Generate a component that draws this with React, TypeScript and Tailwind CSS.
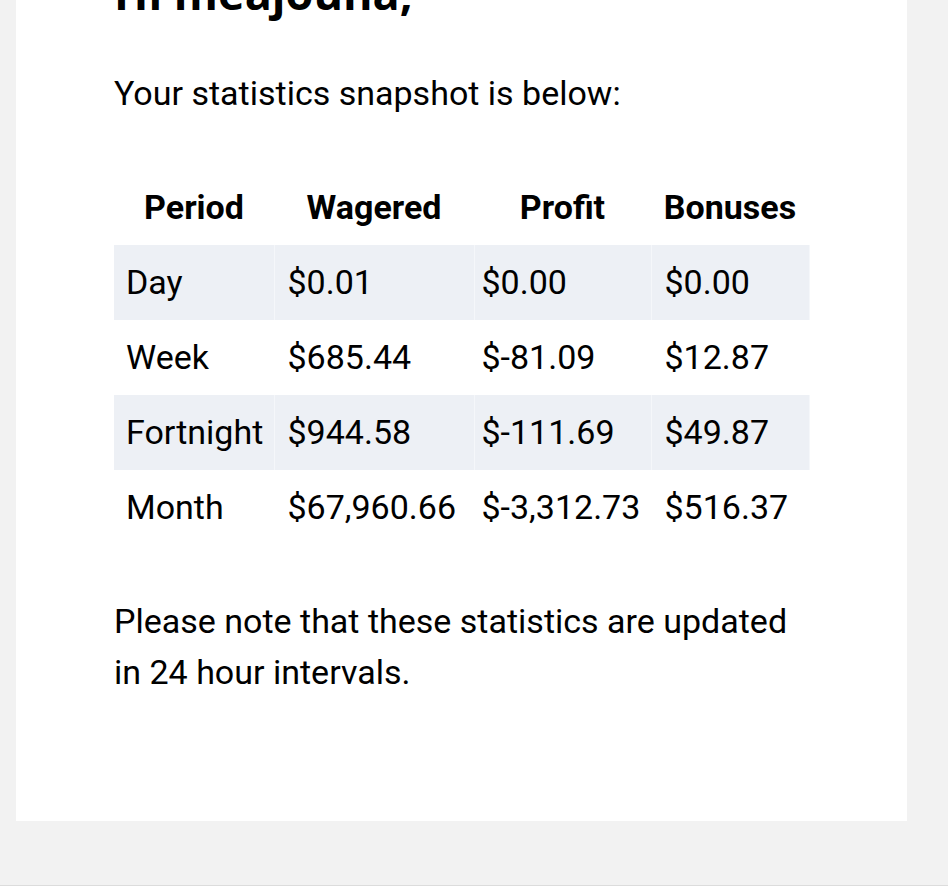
const rows = [
  { period: "Day", wagered: "$0.01", profit: "$0.00", bonuses: "$0.00" },
  { period: "Week", wagered: "$685.44", profit: "$-81.09", bonuses: "$12.87" },
  { period: "Fortnight", wagered: "$944.58", profit: "$-111.69", bonuses: "$49.87" },
  { period: "Month", wagered: "$67,960.66", profit: "$-3,312.73", bonuses: "$516.37" },
];

export default function App() {
  return (
    <div className="overflow-hidden">
      <div className="bg-[#f2f2f2] border-b border-[#dcdcdc] pb-[64px]">
        <div className="ml-[16px] w-[891px] bg-white px-[98px] pb-[123px] text-black font-['Roboto',sans-serif]">
          {/* greeting, scrolled mostly out of view */}
          <h1 className="-mt-[30px] text-[45px] leading-none font-bold font-['Open_Sans',sans-serif]">
            Hi meajouna,
          </h1>

          <p className="mt-[53px] text-[34px] leading-[1.5]">
            Your statistics snapshot is below:
          </p>

          <table className="mt-[51px] w-full table-fixed border-collapse text-[34px] leading-[1.5]">
            <thead>
              <tr>
                <th className="w-[160px] h-[75px] p-0 font-bold text-center">Period</th>
                <th className="w-[200px] h-[75px] p-0 font-bold text-center">Wagered</th>
                <th className="w-[177px] h-[75px] p-0 font-bold text-center">Profit</th>
                <th className="w-[158px] h-[75px] p-0 font-bold text-center">Bonuses</th>
              </tr>
            </thead>
            <tbody>
              {rows.map((r, i) => {
                const cell =
                  i % 2 === 0
                    ? "h-[75px] py-0 whitespace-nowrap border-r border-[#f5f7fa]"
                    : "h-[75px] py-0 whitespace-nowrap border-r border-white";
                return (
                  <tr key={r.period} className={i % 2 === 0 ? "bg-[#edf0f5]" : "bg-white"}>
                    <td className={`${cell} px-[12px]`}>{r.period}</td>
                    <td className={`${cell} px-[13px]`}>{r.wagered}</td>
                    <td className={`${cell} px-[7px]`}>{r.profit}</td>
                    <td className={`${cell} px-[13px]`}>{r.bonuses}</td>
                  </tr>
                );
              })}
            </tbody>
          </table>

          <p className="mt-[51px] text-[34px] leading-[1.5]">
            Please note that these statistics are updated in 24 hour intervals.
          </p>
        </div>
      </div>
      <div className="h-[8px] bg-white" />
    </div>
  );
}
